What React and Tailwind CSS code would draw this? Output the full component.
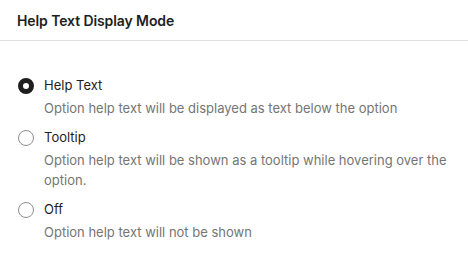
import { useState } from "react";

const options = [
  {
    value: "help",
    label: "Help Text",
    help: "Option help text will be displayed as text below the option",
  },
  {
    value: "tooltip",
    label: "Tooltip",
    help: "Option help text will be shown as a tooltip while hovering over the option.",
  },
  {
    value: "off",
    label: "Off",
    help: "Option help text will not be shown",
  },
];

function Radio({ checked }) {
  return checked ? (
    <span className="block w-4 h-4 shrink-0 rounded-full border-[5px] border-[#1e1e1e] bg-white" />
  ) : (
    <span className="block w-4 h-4 shrink-0 rounded-full border border-[#8f8f8f] bg-white" />
  );
}

export default function App() {
  const [mode, setMode] = useState("help");

  return (
    <div className="w-[468px] h-[258px] bg-white font-['Inter',sans-serif] antialiased">
      <div className="h-[41px] border-b border-[#e0e0e0] px-[17px] flex items-center">
        <h2 className="text-[14px] font-semibold text-[#1e1e1e] tracking-[-0.1px]">
          Help Text Display Mode
        </h2>
      </div>
      <div className="pt-[35px] pl-[18px] pr-4 flex flex-col gap-2.5">
        {options.map((opt) => (
          <div key={opt.value}>
            <label
              className="flex items-center gap-[10px] h-5 cursor-pointer"
              onClick={() => setMode(opt.value)}
            >
              <Radio checked={mode === opt.value} />
              <span className="text-[13px] text-[#1e1e1e]">{opt.label}</span>
            </label>
            <p className="mt-0.5 pl-[26px] text-[13px] leading-5 text-[#757575]">
              {opt.help}
            </p>
          </div>
        ))}
      </div>
    </div>
  );
}
